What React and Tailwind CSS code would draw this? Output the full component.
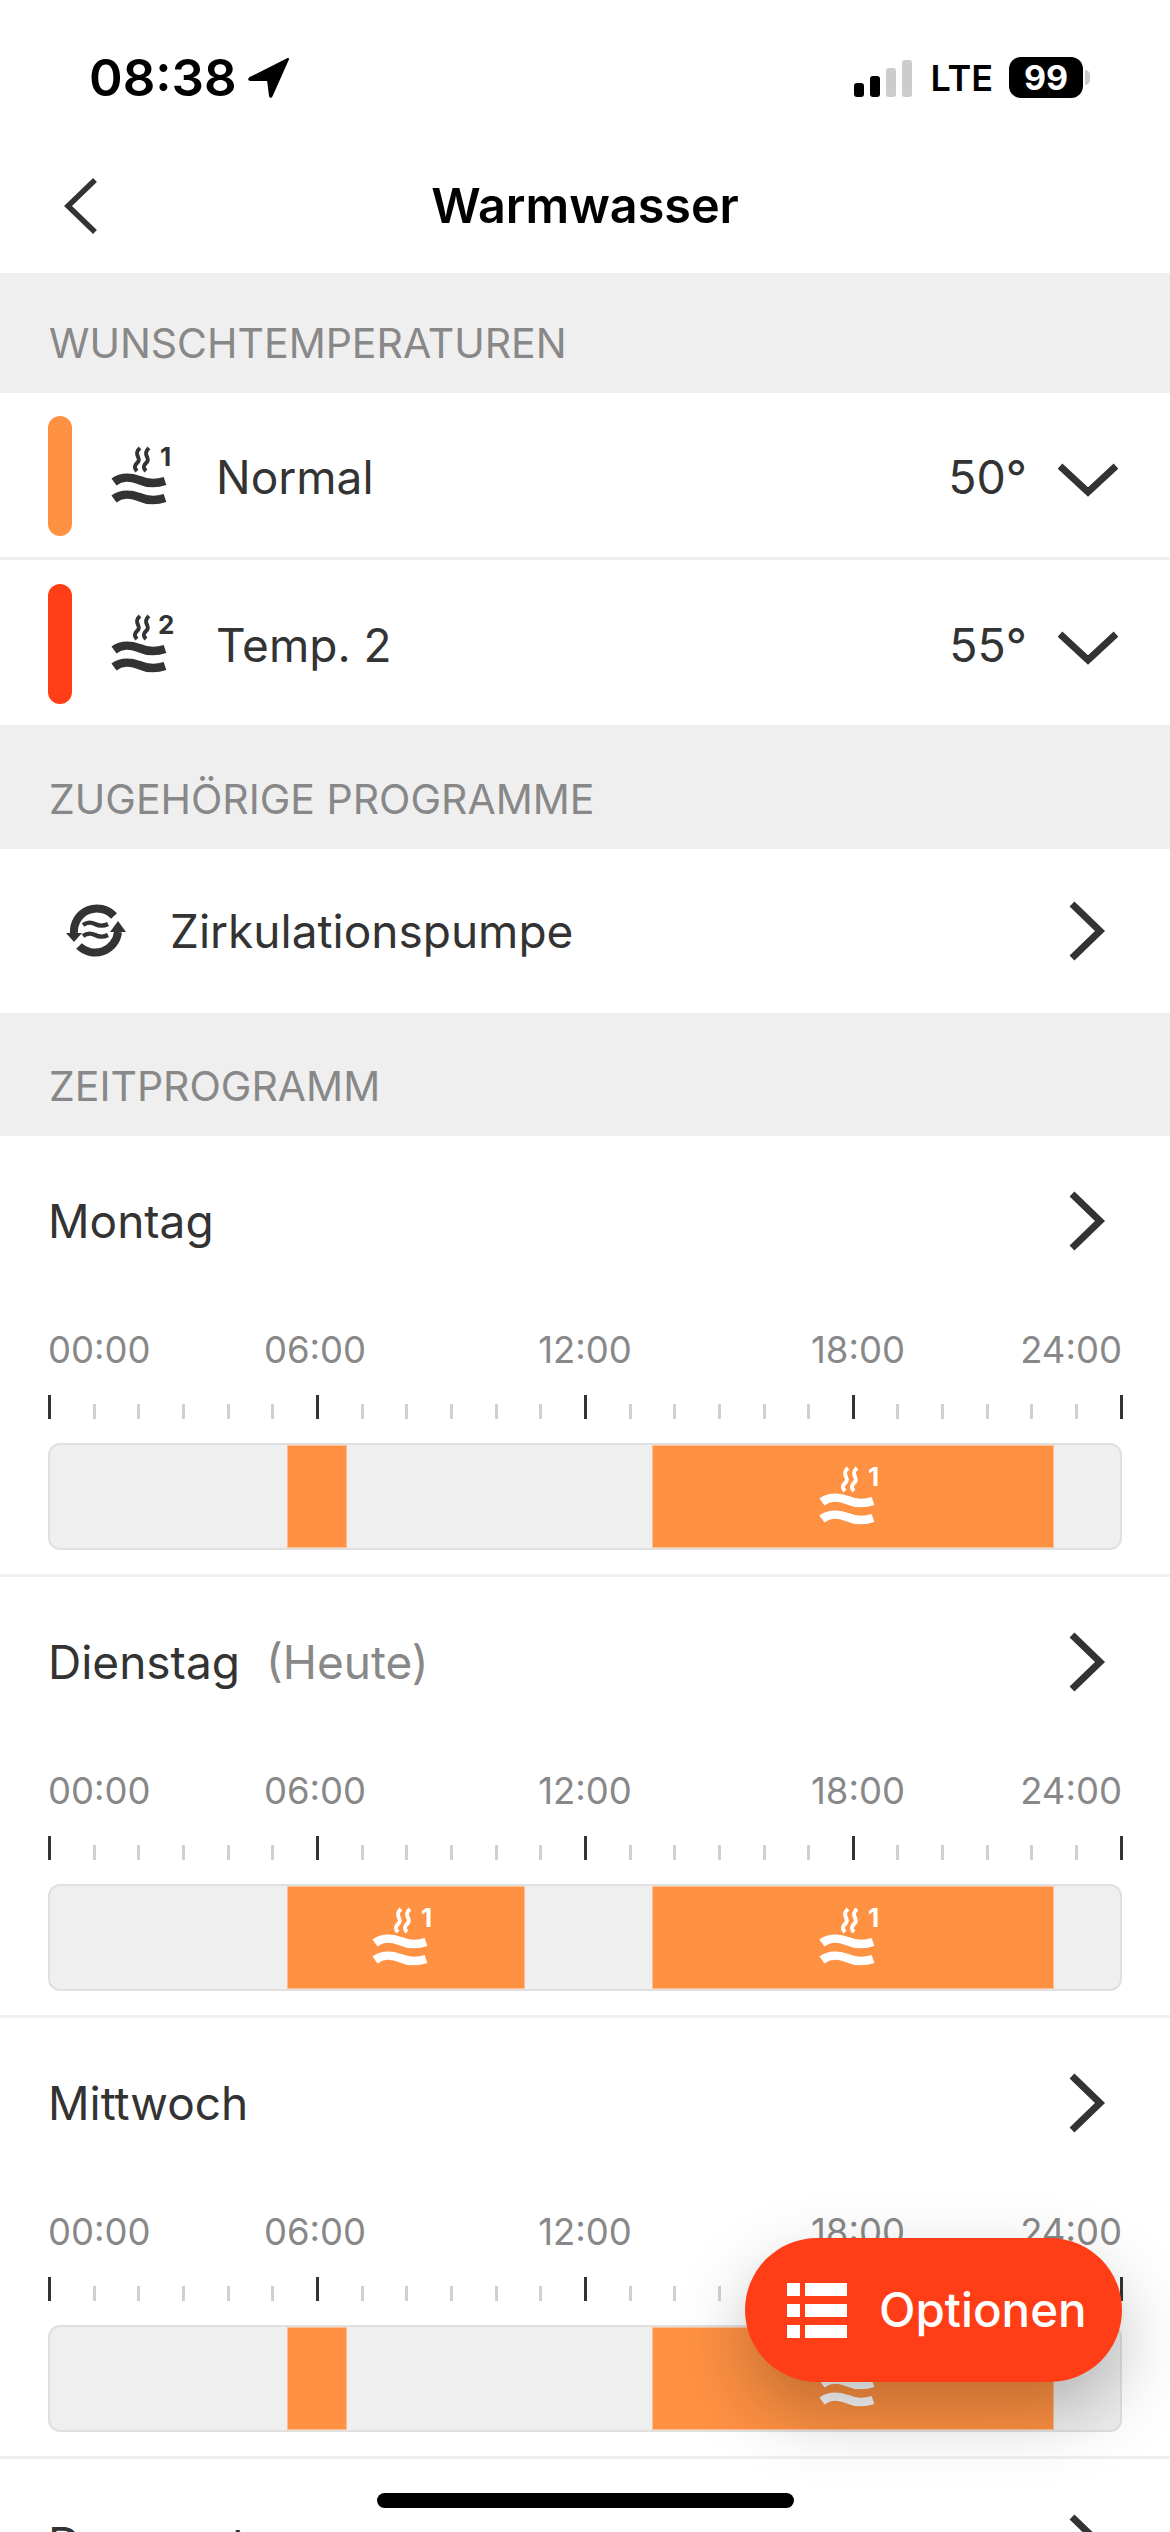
import React from "react";

const DAYS = [
  { name: "Montag", blocks: [{ ml: 237, w: 60 }, { ml: 305, w: 402, icon: true }] },
  { name: "Dienstag", note: "(Heute)", blocks: [{ ml: 237, w: 238, icon: true }, { ml: 127, w: 402, icon: true }] },
  { name: "Mittwoch", blocks: [{ ml: 237, w: 60 }, { ml: 305, w: 402, icon: true }] },
  { name: "Donnerstag", blocks: [] },
];

const TICKS = Array.from({ length: 25 }, (_, i) => i);

/* ---------------- ICONS ---------------- */
function WaterIcon({ num = "1", color = "#333333" }) {
  return (
    <svg width="62" height="60" viewBox="0 0 62 60" fill="none" className="shrink-0 overflow-visible">
      <path d="M26 1 C18 8 29 11 23 16 C20 19 20 21 23 24" stroke={color} strokeWidth="4" />
      <path d="M35 1 C27 8 38 11 32 16 C29 19 29 21 32 24" stroke={color} strokeWidth="4" />
      <path d="M0 35 C8 29 16 30 25 33 C34 37 42 37 51 34" stroke={color} strokeWidth="8.5" />
      <path d="M0 52 C8 46 16 47 25 50 C34 54 42 54 51 51" stroke={color} strokeWidth="8.5" />
      <text
        x={num === "1" ? 46 : 44}
        y="19"
        fill={color}
        fontSize="26"
        fontWeight="700"
        fontFamily="Inter, sans-serif"
      >
        {num}
      </text>
    </svg>
  );
}

function CircIcon() {
  return (
    <svg width="60" height="56" viewBox="0 0 60 56" fill="none" className="shrink-0">
      <path d="M8 30 A23 23 0 0 1 48 13" stroke="#333333" strokeWidth="8" />
      <path d="M13 43 A23 23 0 0 0 52 29" stroke="#333333" strokeWidth="8" />
      <path d="M0 30 L16 30 L8 39 Z" fill="#333333" />
      <path d="M44 29 L60 29 L52 18 Z" fill="#333333" />
      <path d="M17 22 C21 19 25 19 29 21 C33 23 38 23 42 21" stroke="#333333" strokeWidth="4.4" />
      <path d="M17 33 C21 30 25 30 29 32 C33 34 38 34 42 32" stroke="#333333" strokeWidth="4.4" />
    </svg>
  );
}

function ChevronRight() {
  return (
    <svg width="38" height="60" viewBox="0 0 38 60" fill="none" className="shrink-0">
      <path d="M4 3 L32 30 L4 57" stroke="#333333" strokeWidth="7" />
    </svg>
  );
}

function ChevronDown() {
  return (
    <svg width="60" height="34" viewBox="0 0 60 34" fill="none" className="shrink-0">
      <path d="M2 3 L30 29 L58 3" stroke="#333333" strokeWidth="7" />
    </svg>
  );
}

/* ---------------- PARTS ---------------- */
function SectionHeader({ title, height }) {
  return (
    <div className={`flex items-end bg-[#efefef] px-[49px] pb-[26px] ${height}`}>
      <span className="text-[41px] leading-[48px] text-[#888888]">{title}</span>
    </div>
  );
}

function TempRow({ color, num, label, value, height, border, top }) {
  return (
    <div className={`flex items-start pl-[48px] pr-[52px] ${top} ${height} ${border}`}>
      <div className={`h-[120px] w-[24px] rounded-[12px] ${color}`} />
      <div className="ml-[42px] mt-[31px]">
        <WaterIcon num={num} />
      </div>
      <span className="ml-[40px] mt-[33px] text-[46px] leading-[56px] text-[#333333]">{label}</span>
      <span className="ml-auto mt-[33px] text-[46.5px] leading-[56px] text-[#333333]">{value}</span>
      <div className="ml-[31px] mt-[47px]">
        <ChevronDown />
      </div>
    </div>
  );
}

function TimeBar({ blocks }) {
  return (
    <div className="mt-[24px] flex h-[107px] w-[1074px] overflow-hidden rounded-[12px] border-2 border-[#e0e0e0] bg-[#efefef]">
      {blocks.map((b, i) => (
        <div
          key={i}
          style={{ marginLeft: b.ml, width: b.w }}
          className="flex shrink-0 items-center justify-center border border-[#ffbe90] bg-[#ff9142]"
        >
          {b.icon && <WaterIcon color="#ffffff" />}
        </div>
      ))}
    </div>
  );
}

function DayRow({ day }) {
  return (
    <div className="border-b-[3px] border-[#f0f0f0] px-[48px] pb-[24px]">
      <div className="flex h-[170px] items-center justify-between pr-[16px]">
        <div className="flex items-baseline text-[46px] text-[#333333]">
          <span>{day.name}</span>
          {day.note && <span className="ml-[26px] text-[#888888]">{day.note}</span>}
        </div>
        <ChevronRight />
      </div>
      <div className="mt-[24px] grid h-[40px] w-[1074px] grid-cols-[132px_270px_270px_276px_126px] text-[36.5px] leading-[40px] text-[#888888]">
        <span className="text-left">00:00</span>
        <span className="text-center">06:00</span>
        <span className="text-center">12:00</span>
        <span className="text-center">18:00</span>
        <span className="text-right">24:00</span>
      </div>
      <div className="mt-[25px] flex h-[24px] w-[1075px] items-end justify-between">
        {TICKS.map(t =>
          t % 6 === 0 ? (
            <div key={t} className="h-[24px] w-[3px] bg-[#333333]" />
          ) : (
            <div key={t} className="h-[15px] w-[3px] bg-[#d0d0d0]" />
          )
        )}
      </div>
      <TimeBar blocks={day.blocks} />
    </div>
  );
}

/* ---------------- PAGE ---------------- */
export default function App() {
  return (
    <div className="relative h-[2532px] w-[1170px] overflow-hidden bg-white [font-family:Inter,sans-serif]">
      {/* STATUS BAR */}
      <div className="flex h-[140px] items-start pl-[89px] pr-[80px] pt-[57px]">
        <span className="text-[51px] font-semibold leading-[42px] text-black">08:38</span>
        <svg width="42" height="40" viewBox="0 0 42 40" fill="#000000" className="ml-[11px] mt-[1px]">
          <path d="M40 1 L2 20 Q0 22 3 22 L20 22 L22 38 Q23 40 24 37 Z" stroke="#000000" strokeWidth="2" strokeLinejoin="round" />
        </svg>
        <div className="ml-auto mt-[2px] flex h-[38px] items-end gap-[6px]">
          <div className="h-[14px] w-[10px] rounded-[3px] bg-black" />
          <div className="h-[21px] w-[10px] rounded-[3px] bg-black" />
          <div className="h-[29px] w-[10px] rounded-[3px] bg-[#cccccc]" />
          <div className="h-[37px] w-[10px] rounded-[3px] bg-[#cccccc]" />
        </div>
        <span className="ml-[18px] text-[36px] font-semibold leading-[42px] text-black">LTE</span>
        <div className="ml-[16px] flex h-[41px] w-[74px] items-center justify-center rounded-[12px] bg-black text-[34px] font-bold leading-none text-white">
          99
        </div>
        <div className="ml-[2px] mt-[13px] h-[15px] w-[5px] rounded-r-full bg-[#cccccc]" />
      </div>

      {/* NAV */}
      <div className="relative flex h-[133px] items-center justify-center">
        <svg width="34" height="56" viewBox="0 0 34 56" fill="none" className="absolute left-[64px] top-[38px]">
          <path d="M31 2 L4 28 L31 54" stroke="#333333" strokeWidth="5.5" />
        </svg>
        <span className="text-[48.5px] font-semibold text-black">Warmwasser</span>
      </div>

      <SectionHeader title="WUNSCHTEMPERATUREN" height="h-[120px]" />
      <TempRow
        color="bg-[#ff9142]"
        num="1"
        label="Normal"
        value="50°"
        height="h-[167px]"
        top="pt-[23px]"
        border="border-b-[3px] border-[#f0f0f0]"
      />
      <TempRow color="bg-[#ff3e17]" num="2" label="Temp. 2" value="55°" height="h-[165px]" top="pt-[24px]" border="" />

      <SectionHeader title="ZUGEHÖRIGE PROGRAMME" height="h-[124px]" />
      <div className="flex h-[164px] items-center pl-[66px] pr-[64px]">
        <CircIcon />
        <span className="ml-[44px] text-[46px] text-[#333333]">Zirkulationspumpe</span>
        <div className="ml-auto">
          <ChevronRight />
        </div>
      </div>

      <SectionHeader title="ZEITPROGRAMM" height="h-[123px]" />
      {DAYS.map(d => (
        <DayRow key={d.name} day={d} />
      ))}

      {/* FLOATING BUTTON */}
      <div className="absolute left-[745px] top-[2238px] flex h-[144px] w-[377px] items-center rounded-[72px] bg-[#ff3e17] pl-[42px] shadow-[0_30px_70px_rgba(0,0,0,0.25)]">
        <div className="grid grid-cols-[13px_42px] gap-x-[5px] gap-y-[8px]">
          <div className="h-[13px] bg-white" />
          <div className="h-[13px] bg-white" />
          <div className="h-[13px] bg-white" />
          <div className="h-[13px] bg-white" />
          <div className="h-[13px] bg-white" />
          <div className="h-[13px] bg-white" />
        </div>
        <span className="ml-[32px] text-[47.5px] font-medium text-white">Optionen</span>
      </div>

      {/* HOME INDICATOR */}
      <div className="absolute left-[377px] top-[2493px] h-[15px] w-[417px] rounded-full bg-black" />
    </div>
  );
}
